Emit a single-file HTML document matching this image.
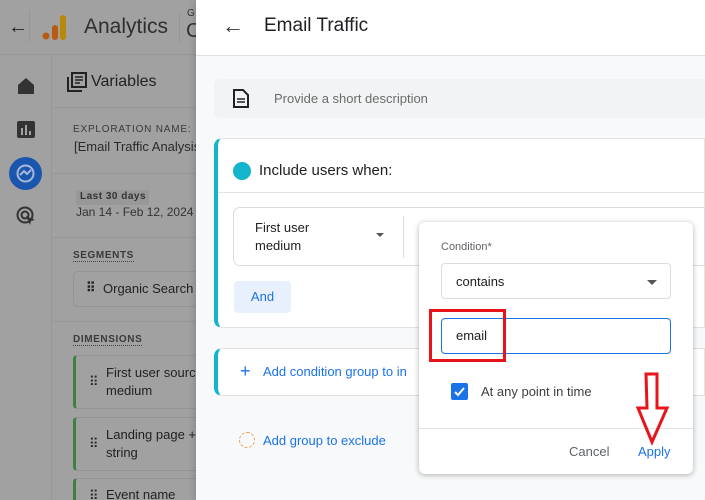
<!DOCTYPE html>
<html style="width:705px;height:500px;overflow:hidden"><head><style>
*{box-sizing:border-box;margin:0;padding:0}
body{width:705px;height:500px;overflow:hidden;position:relative;font-family:"Liberation Sans",Arial,sans-serif;background:#a1a1a1}
.abs{position:absolute}
</style></head><body>
<div class="abs" style="left:0;top:0;width:196px;height:55px;background:#a1a1a1;border-bottom:1px solid #979797"></div>
<div class="abs" style="left:8px;top:16px;font-size:20px;color:#222">&#8592;</div>
<div class="abs" style="left:29px;top:10px;width:1px;height:32px;background:#969696"></div>
<svg class="abs" style="left:42px;top:13px" width="26" height="28"><circle cx="4" cy="23" r="3.5" fill="#b85a10"/><rect x="10" y="12" width="6" height="15" rx="3" fill="#b85a10"/><rect x="18" y="2" width="6" height="25" rx="3" fill="#b8880a"/></svg>
<div class="abs" style="left:84px;top:15px;font-size:21px;color:#2f2f2f">Analytics</div>
<div class="abs" style="left:179px;top:12px;width:1px;height:30px;background:#969696"></div>
<div class="abs" style="left:187px;top:8px;font-size:10px;color:#333">G</div>
<div class="abs" style="left:186px;top:20px;font-size:20px;color:#333">C</div>
<div class="abs" style="left:51px;top:56px;width:1px;height:444px;background:#979797"></div>
<svg class="abs" style="left:17px;top:77px" width="18" height="18"><path d="M1 8 9 1 17 8v9H1z" fill="#333"/></svg>
<svg class="abs" style="left:17px;top:121px" width="18" height="18"><rect x="0" y="0" width="18" height="17" rx="2" fill="#333"/><rect x="4" y="7" width="2" height="7" fill="#a1a1a1"/><rect x="8" y="4" width="2" height="10" fill="#a1a1a1"/><rect x="12" y="10" width="2" height="4" fill="#a1a1a1"/></svg>
<div class="abs" style="left:9px;top:157px;width:33px;height:33px;border-radius:50%;background:#1a56ad"></div>
<svg class="abs" style="left:15px;top:163px" width="21" height="21"><circle cx="10.5" cy="10.5" r="8" fill="none" stroke="#a8b8d8" stroke-width="2"/><path d="M5 12 9 8 12 11 16 7" fill="none" stroke="#a8b8d8" stroke-width="2"/></svg>
<svg class="abs" style="left:16px;top:206px" width="22" height="22"><circle cx="9" cy="9" r="7.5" fill="none" stroke="#333" stroke-width="2"/><circle cx="9" cy="9" r="3.5" fill="none" stroke="#333" stroke-width="2"/><path d="M10 10 19 14 15 15 14 19z" fill="#333"/></svg>
<svg class="abs" style="left:67px;top:72px" width="20" height="20"><rect x="5" y="1" width="14" height="14" fill="none" stroke="#222" stroke-width="2"/><path d="M1 5v14h14" fill="none" stroke="#222" stroke-width="2"/><path d="M8 5h8M8 8h8M8 11h5" stroke="#222" stroke-width="1.5"/></svg>
<div class="abs" style="left:91px;top:73px;font-size:16px;color:#222">Variables</div>
<div class="abs" style="left:52px;top:107px;width:144px;height:1px;background:#979797"></div>
<div class="abs" style="left:73px;top:124px;font-size:10px;letter-spacing:.8px;color:#3a3a3a">EXPLORATION NAME:</div>
<div class="abs" style="left:74px;top:139px;font-size:13px;color:#2a2a2a;white-space:nowrap">[Email Traffic Analysis</div>
<div class="abs" style="left:52px;top:173px;width:144px;height:1px;background:#979797"></div>
<div class="abs" style="left:76px;top:190px;width:73px;height:15px;background:#989898"></div>
<div class="abs" style="left:80px;top:191px;font-size:10px;font-weight:bold;letter-spacing:.5px;color:#333">Last 30 days</div>
<div class="abs" style="left:76px;top:205px;font-size:12px;color:#333">Jan 14 - Feb 12, 2024</div>
<div class="abs" style="left:52px;top:237px;width:144px;height:1px;background:#979797"></div>
<div class="abs" style="left:73px;top:250px;font-size:10px;font-weight:bold;letter-spacing:.6px;color:#3a3a3a;border-bottom:1px dotted #444">SEGMENTS</div>
<div class="abs" style="left:73px;top:271px;width:140px;height:36px;border:1px solid #959595;border-radius:5px"></div>
<div class="abs" style="left:86px;top:280px;font-size:13px;color:#222;font-weight:bold">⠿</div>
<div class="abs" style="left:103px;top:281px;font-size:13px;color:#222;white-space:nowrap">Organic Search</div>
<div class="abs" style="left:52px;top:321px;width:144px;height:1px;background:#979797"></div>
<div class="abs" style="left:73px;top:334px;font-size:10px;font-weight:bold;letter-spacing:.6px;color:#3a3a3a;border-bottom:1px dotted #444">DIMENSIONS</div>
<div class="abs" style="left:73px;top:355px;width:140px;height:54px;border:1px solid #959595;border-left:3px solid #3f7f42;border-radius:4px"></div>
<div class="abs" style="left:89px;top:374px;font-size:13px;color:#222">⠿</div>
<div class="abs" style="left:106px;top:364px;font-size:13px;color:#222;line-height:18px;white-space:nowrap">First user sourc<br>medium</div>
<div class="abs" style="left:73px;top:417px;width:140px;height:54px;border:1px solid #959595;border-left:3px solid #3f7f42;border-radius:4px"></div>
<div class="abs" style="left:89px;top:436px;font-size:13px;color:#222">⠿</div>
<div class="abs" style="left:106px;top:426px;font-size:13px;color:#222;line-height:18px;white-space:nowrap">Landing page +<br>string</div>
<div class="abs" style="left:73px;top:478px;width:140px;height:22px;border:1px solid #959595;border-left:3px solid #3f7f42;border-bottom:none;border-radius:4px 4px 0 0"></div>
<div class="abs" style="left:89px;top:488px;font-size:13px;color:#222">⠿</div>
<div class="abs" style="left:106px;top:487px;font-size:13px;color:#222">Event name</div>

<div class="abs" style="left:196px;top:0;width:509px;height:500px;background:#f8f9fa;box-shadow:-2px 0 6px rgba(0,0,0,.15)">
 <div class="abs" style="left:0;top:0;width:509px;height:56px;background:#fff;border-bottom:1px solid #e3e3e3"></div>
 <div class="abs" style="left:26px;top:13px;font-size:22px;color:#333">&#8592;</div>
 <div class="abs" style="left:68px;top:15px;font-size:19px;color:#202124">Email Traffic</div>
 <div class="abs" style="left:18px;top:79px;width:491px;height:39px;background:#f1f3f4;border-radius:6px 0 0 6px"></div>
 <svg class="abs" style="left:37px;top:89px" width="16" height="19"><path d="M1 1h9l5 5v12H1z" fill="none" stroke="#222" stroke-width="2"/><path d="M4 10h8M4 13h8" stroke="#222" stroke-width="1.6"/></svg>
 <div class="abs" style="left:78px;top:91px;font-size:13px;color:#6b6b6b">Provide a short description</div>
 <div class="abs" style="left:18px;top:138px;width:491px;height:190px;background:#fff;border:1px solid #e3e3e3;border-left:4px solid #12b5cb;border-radius:8px 0 0 8px"></div>
 <div class="abs" style="left:37px;top:162px;width:18px;height:18px;border-radius:50%;background:#12b5cb"></div>
 <div class="abs" style="left:63px;top:162px;font-size:15px;color:#202124">Include users when:</div>
 <div class="abs" style="left:22px;top:192px;width:487px;height:1px;background:#e3e3e3"></div>
 <div class="abs" style="left:37px;top:207px;width:472px;height:59px;border:1px solid #dadce0;border-radius:7px 0 0 7px"></div>
 <div class="abs" style="left:59px;top:219px;font-size:13px;color:#202124;line-height:18px">First user<br>medium</div>
 <div class="abs" style="left:180px;top:233px;width:0;height:0;border-left:4px solid transparent;border-right:4px solid transparent;border-top:4px solid #555"></div>
 <div class="abs" style="left:207px;top:216px;width:1px;height:42px;background:#dadce0"></div>
 <div class="abs" style="left:38px;top:281px;width:57px;height:32px;background:#e8f0fe;border-radius:4px;font-size:13px;color:#1a73e8;text-align:center;line-height:32px">And</div>
 <div class="abs" style="left:18px;top:348px;width:491px;height:48px;background:#fff;border:1px solid #e3e3e3;border-left:4px solid #12b5cb;border-radius:8px 0 0 8px"></div>
 <div class="abs" style="left:44px;top:361px;font-size:18px;color:#1a73e8">+</div>
 <div class="abs" style="left:67px;top:364px;font-size:13px;color:#1a73e8;white-space:nowrap">Add condition group to in</div>
 <div class="abs" style="left:43px;top:432px;width:16px;height:16px;border:1px dashed #e8a060;border-radius:50%"></div>
 <div class="abs" style="left:67px;top:433px;font-size:13px;color:#1a73e8">Add group to exclude</div>
</div>

<div class="abs" style="left:419px;top:222px;width:274px;height:252px;background:#fff;border-radius:6px;box-shadow:0 1px 6px rgba(0,0,0,.3)">
 <div class="abs" style="left:22px;top:19px;font-size:11px;color:#5f6368">Condition*</div>
 <div class="abs" style="left:22px;top:41px;width:230px;height:36px;border:1px solid #dadce0;border-radius:4px"></div>
 <div class="abs" style="left:37px;top:52px;font-size:13px;color:#202124">contains</div>
 <div class="abs" style="left:228px;top:58px;width:0;height:0;border-left:5px solid transparent;border-right:5px solid transparent;border-top:5px solid #555"></div>
 <div class="abs" style="left:22px;top:96px;width:230px;height:36px;border:1.5px solid #1a73e8;border-radius:4px"></div>
 <div class="abs" style="left:37px;top:106px;font-size:13px;color:#202124">email</div>
 <div class="abs" style="left:32px;top:161px;width:17px;height:17px;background:#1a73e8;border-radius:2px"></div>
 <svg class="abs" style="left:34px;top:163px" width="13" height="13"><path d="M2 7 5 10 11 3" fill="none" stroke="#fff" stroke-width="2"/></svg>
 <div class="abs" style="left:62px;top:162px;font-size:13px;color:#3c4043">At any point in time</div>
 <div class="abs" style="left:0;top:206px;width:274px;height:1px;background:#e3e3e3"></div>
 <div class="abs" style="left:150px;top:222px;font-size:13px;color:#5f6368">Cancel</div>
 <div class="abs" style="left:219px;top:222px;font-size:13px;color:#1a73e8">Apply</div>
</div>
<div class="abs" style="left:429px;top:309px;width:77px;height:53px;border:3px solid #e8141c"></div>
<svg class="abs" style="left:636px;top:372px" width="34" height="74"><path d="M10 2h11v34h10L16 70 2 36h9z" fill="none" stroke="#e8141c" stroke-width="3"/></svg>
</body></html>
